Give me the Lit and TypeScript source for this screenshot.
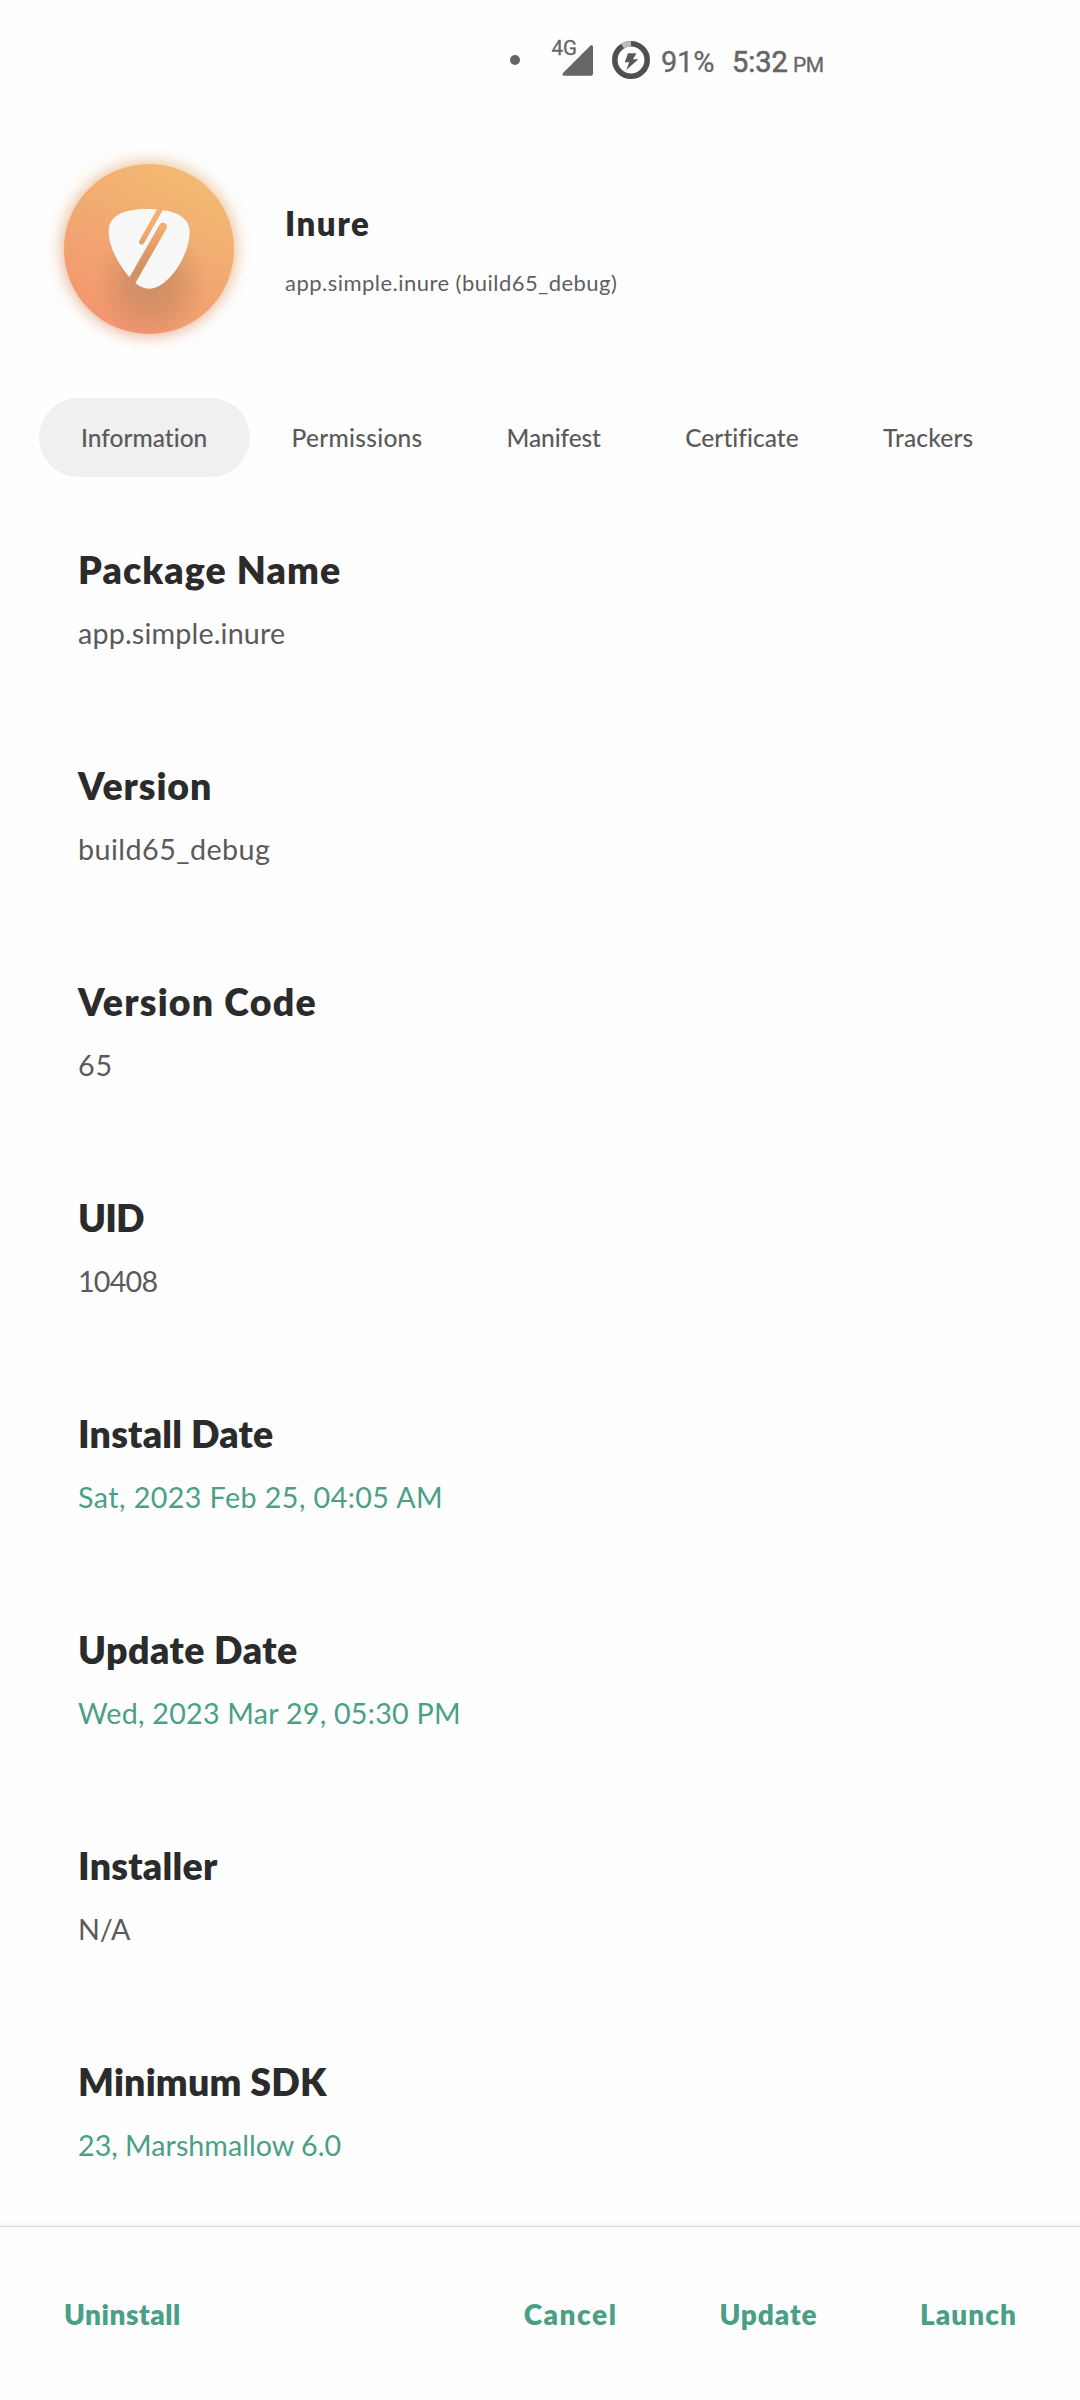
import { LitElement, html, css, svg } from "lit";
import { customElement, property } from "lit/decorators.js";

/** One line of text, tracked so that its glyphs span a given width. */
@customElement("tracked-text")
class TrackedText extends LitElement {
  @property() text = "";
  @property({ type: Number }) span = 0;

  static styles = css`
    :host {
      display: block;
      white-space: nowrap;
      font-variant-ligatures: none;
    }
  `;

  updated() {
    const cs = getComputedStyle(this);
    const ctx = document.createElement("canvas").getContext("2d")!;
    ctx.font = `${cs.fontWeight} ${cs.fontSize} ${cs.fontFamily}`;
    const m = ctx.measureText(this.text);
    const ink = m.actualBoundingBoxRight + m.actualBoundingBoxLeft;
    const gap = (this.span - ink) / (this.text.length - 1);
    this.style.letterSpacing = `${gap.toFixed(3)}px`;
    this.style.marginRight = `${(-gap).toFixed(3)}px`;
  }

  render() {
    return html`${this.text}`;
  }
}

interface Detail {
  label: string;
  labelSpan: number;
  value: string;
  valueSpan: number;
  link?: boolean;
}

const details: Detail[] = [
  { label: "Package Name", labelSpan: 260, value: "app.simple.inure", valueSpan: 207 },
  { label: "Version", labelSpan: 133, value: "build65_debug", valueSpan: 190 },
  { label: "Version Code", labelSpan: 238.5, value: "65", valueSpan: 31.5 },
  { label: "UID", labelSpan: 64, value: "10408", valueSpan: 77.5 },
  { label: "Install Date", labelSpan: 193, value: "Sat, 2023 Feb 25, 04:05 AM", valueSpan: 364, link: true },
  { label: "Update Date", labelSpan: 217, value: "Wed, 2023 Mar 29, 05:30 PM", valueSpan: 381.5, link: true },
  { label: "Installer", labelSpan: 138, value: "N/A", valueSpan: 51 },
  { label: "Minimum SDK", labelSpan: 248, value: "23, Marshmallow 6.0", valueSpan: 262, link: true },
];

const tabs: [string, number][] = [
  ["Information", 124],
  ["Permissions", 128],
  ["Manifest", 92.5],
  ["Certificate", 112.5],
  ["Trackers", 89.5],
];

const logo = svg`
  <defs>
    <linearGradient id="disc" gradientUnits="userSpaceOnUse" x1="200" y1="560" x2="440" y2="100">
      <stop offset="0" stop-color="#f3956f" />
      <stop offset="0.5" stop-color="#f2a871" />
      <stop offset="1" stop-color="#f2b972" />
    </linearGradient>
    <radialGradient id="shade" gradientUnits="userSpaceOnUse" cx="334" cy="430" r="170">
      <stop offset="0" stop-color="#b9805c" stop-opacity="0.62" />
      <stop offset="0.45" stop-color="#b9805c" stop-opacity="0.44" />
      <stop offset="1" stop-color="#b9805c" stop-opacity="0" />
    </radialGradient>
    <filter id="halo" x="-30%" y="-30%" width="160%" height="160%">
      <feGaussianBlur stdDeviation="26" />
    </filter>
    <linearGradient id="glow" gradientUnits="userSpaceOnUse" x1="200" y1="560" x2="440" y2="100">
      <stop offset="0" stop-color="#e08a66" />
      <stop offset="1" stop-color="#deaa66" />
    </linearGradient>
    <clipPath id="round"><circle cx="327" cy="327" r="255" /></clipPath>
    <mask id="slits" maskUnits="userSpaceOnUse" x="180" y="180" width="300" height="300">
      <rect x="180" y="180" width="300" height="300" fill="#fff" />
      <g stroke="#000" stroke-linecap="round">
        <path d="M370.500 190L305 306" stroke-width="16" />
        <path d="M369 260L266 440" stroke-width="24" />
      </g>
    </mask>
  </defs>
  <circle cx="327" cy="327" r="256" fill="url(#glow)" filter="url(#halo)" opacity="0.85" />
  <circle cx="327" cy="327" r="255" fill="url(#disc)" />
  <circle cx="334" cy="430" r="170" fill="url(#shade)" clip-path="url(#round)" />
  <path mask="url(#slits)" fill="#f8f8f8"
    d="M322 207C245 207 206 230 206 275C206 325 245 388 277 421C295 440 312 446 328 446C385 446 449 345 449 276C449 226 395 207 322 207Z" />
`;

@customElement("app-root")
class AppRoot extends LitElement {
  static styles = css`
    :host {
      display: block;
    }
    * {
      box-sizing: border-box;
    }
    .screen {
      width: 1080px;
      height: 2400px;
      display: flex;
      flex-direction: column;
      overflow: hidden;
      background: #fefefe;
      color: #5a5a5a;
      font-family: Lato, "Open Sans", sans-serif;
    }
    .status {
      flex: none;
      height: 120px;
      padding-left: 510px;
      display: flex;
      align-items: center;
      color: #666;
      font-family: Roboto, sans-serif;
    }
    .dot {
      width: 10px;
      height: 10px;
      border-radius: 50%;
      background: #666;
    }
    .signal {
      width: 44px;
      height: 60px;
      margin-left: 31px;
    }
    .signal text {
      font: 400 20.5px Roboto, sans-serif;
      stroke: #666;
      stroke-width: 0.3px;
    }
    .battery {
      width: 38px;
      height: 38px;
      margin-left: 17px;
    }
    .percent,
    .time,
    .meridiem {
      font-size: 29px;
      line-height: 34px;
      margin-top: 4px;
      letter-spacing: -0.2px;
      -webkit-text-stroke: 0.3px #666;
    }
    .percent {
      margin-left: 11px;
      width: 71px;
    }
    .time {
      width: 61px;
      letter-spacing: 0;
      -webkit-text-stroke: 0.6px #666;
    }
    .meridiem {
      font-size: 21px;
      margin-top: 9px;
      letter-spacing: -0.4px;
    }
    .header {
      flex: none;
      display: flex;
      gap: 25px;
      padding: 20px 0 0 40px;
    }
    .logo {
      width: 220px;
      height: 220px;
      flex: none;
      overflow: visible;
    }
    .identity {
      padding-top: 61px;
      display: flex;
      flex-direction: column;
      gap: 23px;
    }
    .title {
      font-size: 33px;
      line-height: 44px;
      font-weight: 800;
      color: #2b2b2b;
    }
    .subtitle {
      font-size: 22px;
      line-height: 30px;
      color: #5f5f5f;
    }
    .tabs {
      flex: none;
      display: flex;
      margin-top: 38px;
      padding-left: 39px;
      font-size: 24.5px;
      font-weight: 500;
    }
    .tab {
      height: 79px;
      padding: 0 42.3px 0 42px;
      border-radius: 40px;
      display: flex;
      align-items: center;
    }
    .tab.active {
      background: #f0f0f0;
    }
    .details {
      flex: 1;
      min-height: 0;
      overflow: hidden;
      padding: 68px 0 0 78px;
    }
    .detail {
      height: 216px;
      display: flex;
      flex-direction: column;
      gap: 18px;
    }
    .label {
      font-size: 37.5px;
      line-height: 50px;
      font-weight: 800;
      color: #2b2b2b;
    }
    .value {
      font-size: 28.7px;
      line-height: 40px;
    }
    .value.link {
      color: #4a9f87;
    }
    .edge {
      flex: none;
      height: 10px;
      margin-top: -10px;
      background: linear-gradient(rgba(0, 0, 0, 0), rgba(0, 0, 0, 0.025));
    }
    .footer {
      flex: none;
      height: 174px;
      border-top: 1px solid #d6d6d6;
      padding: 70px 64px 0 64px;
      display: flex;
      align-items: flex-start;
      justify-content: space-between;
      font-size: 28px;
      line-height: 34px;
      font-weight: 800;
      color: #4a9f87;
    }
    .actions {
      display: flex;
      gap: 103.5px;
    }
  `;

  render() {
    return html`
      <div class="screen">
        <div class="status">
          <div class="dot"></div>
          <svg class="signal" viewBox="0 -10 44 60">
            <text x="0.500" y="15" fill="#666">4G</text>
            <path
              d="M39.500 5.500L12 33Q10.500 35.800 13 35.800H40Q42 35.800 42 33.800V6.800Q41.500 4 39.500 5.500Z"
              fill="#666" stroke="#fefefe" stroke-width="1.500" paint-order="stroke" />
          </svg>
          <svg class="battery" viewBox="0 0 38 38" fill="none">
            <circle cx="19" cy="19" r="16.200" stroke="#4f4f4f" stroke-width="5.600" />
            <path d="M10.600 5.150A16.200 16.200 0 0 1 19 2.800" stroke="#bdbdbd" stroke-width="5.600" />
            <path d="M16 12.300H24.500L21 18.200H26.500L14.200 29L17.200 21.300H12.800Z" fill="#5a5a5a" />
          </svg>
          <div class="percent">91%</div>
          <div class="time">5:32</div>
          <div class="meridiem">PM</div>
        </div>
        <div class="header">
          <svg class="logo" viewBox="0 0 660 660">${logo}</svg>
          <div class="identity">
            <tracked-text class="title" text="Inure" span="81"></tracked-text>
            <tracked-text class="subtitle" text="app.simple.inure (build65_debug)" span="331"></tracked-text>
          </div>
        </div>
        <div class="tabs">
          ${tabs.map(
            ([name, span], i) => html`
              <div class="tab ${i === 0 ? "active" : ""}">
                <tracked-text text=${name} span=${span}></tracked-text>
              </div>
            `
          )}
        </div>
        <div class="details">
          ${details.map(
            (d) => html`
              <div class="detail">
                <tracked-text class="label" text=${d.label} span=${d.labelSpan}></tracked-text>
                <tracked-text class="value ${d.link ? "link" : ""}" text=${d.value} span=${d.valueSpan}></tracked-text>
              </div>
            `
          )}
        </div>
        <div class="edge"></div>
        <div class="footer">
          <tracked-text text="Uninstall" span="114"></tracked-text>
          <div class="actions">
            <tracked-text text="Cancel" span="91"></tracked-text>
            <tracked-text text="Update" span="96"></tracked-text>
            <tracked-text text="Launch" span="94"></tracked-text>
          </div>
        </div>
      </div>
    `;
  }
}
